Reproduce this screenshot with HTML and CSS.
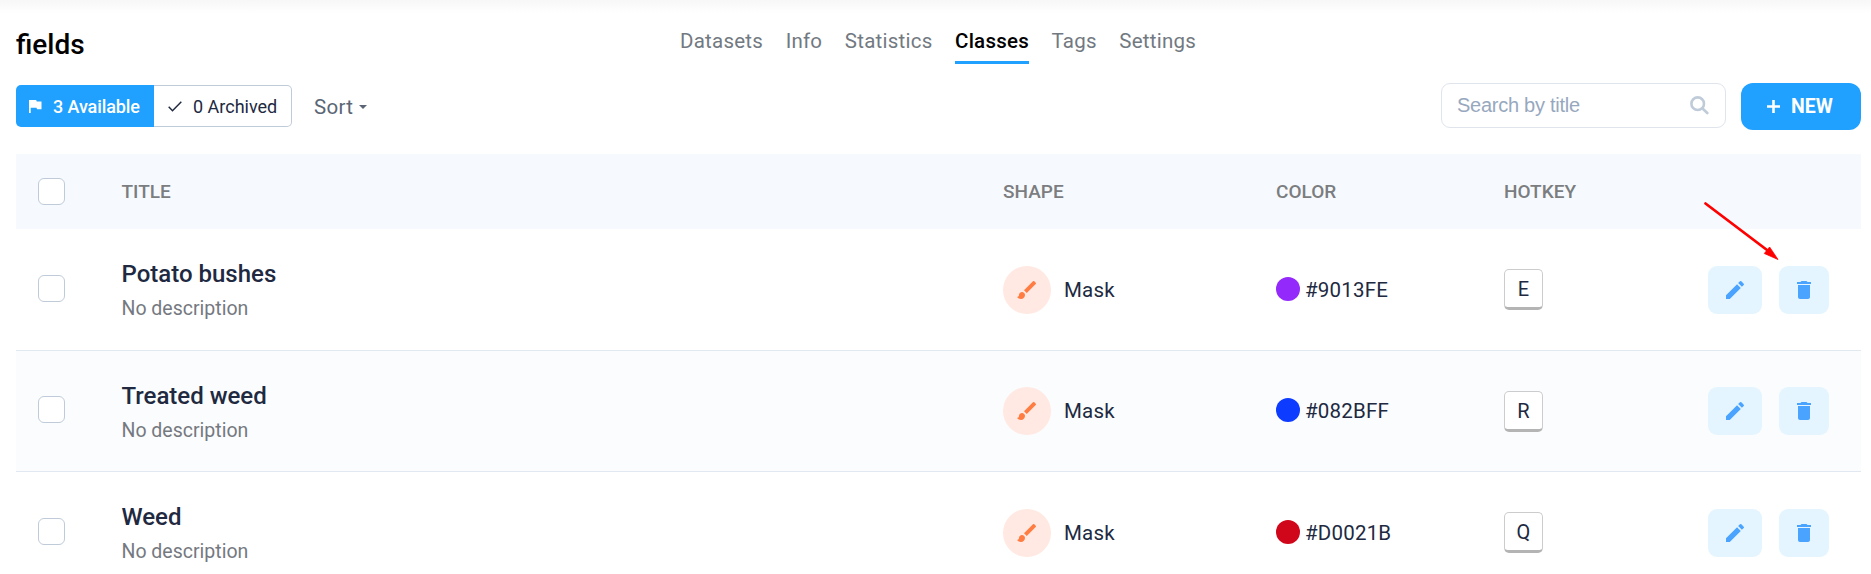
FILE: index.html
```html
<!DOCTYPE html>
<html lang="en">
<head>
<meta charset="utf-8">
<title>fields – Classes</title>
<link rel="stylesheet" href="styles.css">
</head>
<body>
<svg class="defs" width="0" height="0">
  <symbol id="brush" viewBox="0 0 24 24"><path d="M7 14c-1.66 0-3 1.34-3 3 0 1.31-1.16 2-2 2 .92 1.22 2.49 2 4 2 2.21 0 4-1.79 4-4 0-1.66-1.34-3-3-3zm13.71-9.37l-1.34-1.34a.996.996 0 0 0-1.41 0L9 12.25 11.75 15l8.96-8.96a.996.996 0 0 0 0-1.41z"/></symbol>
  <symbol id="pencil" viewBox="0 0 24 24"><path d="M3 17.25V21h3.75L17.81 9.94l-3.75-3.75L3 17.25zM20.71 7.04a.996.996 0 0 0 0-1.41l-2.34-2.34a.996.996 0 0 0-1.41 0l-1.83 1.83 3.75 3.75 1.83-1.83z"/></symbol>
  <symbol id="trash" viewBox="0 0 24 24"><path d="M6 19c0 1.1.9 2 2 2h8c1.1 0 2-.9 2-2V7H6v12zM19 4h-3.500l-1-1h-5l-1 1H5v2h14V4z"/></symbol>
</svg>
<header class="top">
  <h1 class="project">fields</h1>
  <nav class="tabs">
    <a class="tab">Datasets</a><a class="tab">Info</a><a class="tab">Statistics</a><a class="tab active">Classes</a><a class="tab">Tags</a><a class="tab">Settings</a>
  </nav>
</header>
<section class="toolbar">
  <div class="toggle">
    <button class="seg on"><svg class="flag" viewBox="0 0 13 13"><path d="M0 0h7.200l.5 1.600H12.500v7.700H8l-.5-1.600H1.700V13H0z"/></svg><span>3 Available</span></button>
    <button class="seg off"><svg class="check" viewBox="0 0 14 11"><path d="M.7 5.800l3.800 3.900L13.300.8"/></svg><span>0 Archived</span></button>
  </div>
  <div class="sort">Sort<i class="caret"></i></div>
  <div class="search"><span>Search by title</span><svg class="lens" viewBox="0 0 19 19"><circle cx="7.700" cy="7.700" r="6.300"/><path d="M12.500 12.500l4.800 4.500"/></svg></div>
  <button class="new"><svg class="plus" viewBox="0 0 13 13"><path d="M6.500 0v13M0 6.500h13"/></svg><span>NEW</span></button>
</section>
<main class="table">
  <div class="row head"><i class="box"></i><span>TITLE</span><span>SHAPE</span><span>COLOR</span><span>HOTKEY</span></div>
  <div class="row">
    <i class="box"></i>
    <div class="title"><strong>Potato bushes</strong><small>No description</small></div>
    <div class="shape"><span class="disc"><svg><use href="#brush"/></svg></span><span>Mask</span></div>
    <div class="color"><i class="dot purple"></i><span>#9013FE</span></div>
    <kbd class="key">E</kbd>
    <div class="actions"><button class="act edit"><svg><use href="#pencil"/></svg></button><button class="act del"><svg><use href="#trash"/></svg></button></div>
  </div>
  <div class="row alt">
    <i class="box"></i>
    <div class="title"><strong>Treated weed</strong><small>No description</small></div>
    <div class="shape"><span class="disc"><svg><use href="#brush"/></svg></span><span>Mask</span></div>
    <div class="color"><i class="dot blue"></i><span>#082BFF</span></div>
    <kbd class="key">R</kbd>
    <div class="actions"><button class="act edit"><svg><use href="#pencil"/></svg></button><button class="act del"><svg><use href="#trash"/></svg></button></div>
  </div>
  <div class="row">
    <i class="box"></i>
    <div class="title"><strong>Weed</strong><small>No description</small></div>
    <div class="shape"><span class="disc"><svg><use href="#brush"/></svg></span><span>Mask</span></div>
    <div class="color"><i class="dot red"></i><span>#D0021B</span></div>
    <kbd class="key">Q</kbd>
    <div class="actions"><button class="act edit"><svg><use href="#pencil"/></svg></button><button class="act del"><svg><use href="#trash"/></svg></button></div>
  </div>
</main>
<svg class="arrow" viewBox="0 0 80 64"><path class="shaft" d="M5.500 3.500L67 50"/><path class="tip" d="M78 59.500L64.300 53.500L69.600 47z"/></svg>
</body>
</html>
```
FILE: styles.css
```css
* { box-sizing: border-box; }
body {
  margin: 0;
  width: 1871px;
  height: 574px;
  overflow: hidden;
  position: relative;
  font-family: Roboto, "Liberation Sans", sans-serif;
  font-size: 20px;
  color: #20293f;
  background: linear-gradient(#f7f7f7, #fff 13px);
}
button { border: 0; padding: 0; margin: 0; font: inherit; display: flex; align-items: center; }
svg { display: block; flex: none; }
.defs { position: absolute; }

.top { display: flex; height: 83px; padding-left: 16px; }
.project { margin: 0; padding-top: 28px; width: 664px; font-size: 28px; line-height: 34px; font-weight: 500; color: #000; }
.tabs { display: flex; gap: 22.500px; padding-top: 29px; height: 64px; }
.tab { color: #727981; font-size: 20.500px; line-height: 24px; height: 35px; letter-spacing: .24px; }
.tab.active { color: #000; font-weight: 500; border-bottom: 3px solid #20a0ff; }

.toolbar { display: flex; align-items: flex-start; height: 71px; padding: 0 10px 0 16px; }
.toggle { display: flex; margin-top: 2px; height: 42px; font-size: 18px; }
.seg { height: 42px; }
.seg.on { width: 138px; padding-left: 13px; gap: 11px; background: #20a0ff; color: #fff; font-weight: 500; letter-spacing: -.1px; border-radius: 5px 0 0 5px; }
.seg.off { width: 138px; padding-left: 14px; gap: 11px; background: #fff; color: #20293f; border: 1px solid #bfcbd9; border-left: 0; border-radius: 0 5px 5px 0; }
.flag { width: 13px; height: 13px; fill: #fff; }
.check { width: 14px; height: 11px; fill: none; stroke: #20293f; stroke-width: 1.5; }
.sort { display: flex; align-items: center; gap: 6px; margin: 3px 0 0 22px; height: 42px; color: #5a6675; font-size: 20.500px; letter-spacing: .3px; }
.caret { border: 4px solid transparent; border-top-color: #5a6675; border-bottom: 0; }
.search { display: flex; align-items: center; justify-content: space-between; margin-left: auto; width: 285px; height: 45px; padding: 0 16px 0 15px; border: 1px solid #dfe4ed; border-radius: 9px; background: #fff; font-family: "Liberation Sans", Arial, sans-serif; color: #97a8be; letter-spacing: -.26px; }
.lens { width: 19px; height: 19px; fill: none; stroke: #bfcbd9; stroke-width: 2.6; stroke-linecap: round; }
.new { width: 120px; height: 47px; margin-left: 15px; padding-left: 26px; gap: 11px; border-radius: 12px; background: #20a0ff; color: #fff; font-weight: 700; font-size: 19.500px; }
.plus { width: 13px; height: 13px; stroke: #fff; stroke-width: 2.6; }

.table { margin: 0 10px 0 16px; }
.row { display: grid; grid-template-columns: 105.500px 881.500px 273px 228px 204px 1fr; align-items: center; height: 121.5px; padding-top: 1px; border-bottom: 1px solid #e2e8ef; background: #fff; }
.row.head { height: 75px; padding: 0; border: 0; background: #f6fafe; color: #7b7d80; font-size: 19px; font-weight: 500; }
.row.alt { background: #fbfcfe; }
.box { width: 27px; height: 27px; margin-left: 22px; border: 1px solid #bfcbd9; border-radius: 6px; background: #fff; }
.row:not(.head) .box { margin-bottom: 3px; }
.title { display: flex; flex-direction: column; gap: 9px; padding-top: 2px; }
.title strong { font-size: 24px; line-height: 28px; font-weight: 500; }
.title small { font-size: 19.500px; line-height: 24px; color: #75797f; }
.shape { display: flex; align-items: center; gap: 13px; font-size: 20.500px; letter-spacing: .2px; }
.disc { display: grid; place-items: center; width: 48px; height: 48px; border-radius: 50%; background: #ffe9e2; }
.disc svg { width: 24px; height: 24px; fill: #ff7d43; }
.color { display: flex; align-items: center; gap: 5px; font-size: 20.500px; letter-spacing: .2px; }
.dot { width: 24px; height: 24px; margin-bottom: 2px; border-radius: 50%; }
.purple { background: #9429fb; }
.blue { background: #0d3bff; }
.red { background: #d0061a; }
.key { width: 39px; height: 41px; border: 1px solid #ccc; border-bottom: 3px solid #b4b4b4; border-radius: 5px; background: #fff; font: 20px/38px Roboto, sans-serif; text-align: center; }
.actions { display: flex; gap: 17px; }
.act { height: 48px; justify-content: center; border-radius: 9px; background: #e4f5ff; }
.act svg { width: 24px; height: 24px; fill: #4aa3ff; }
.edit { width: 54px; }
.del { width: 50px; }

.arrow { position: absolute; left: 1700px; top: 200px; width: 80px; height: 64px; }
.shaft { fill: none; stroke: #f00; stroke-width: 2.8; stroke-linecap: round; }
.tip { fill: #f00; stroke: #f00; stroke-width: .8; }
```
